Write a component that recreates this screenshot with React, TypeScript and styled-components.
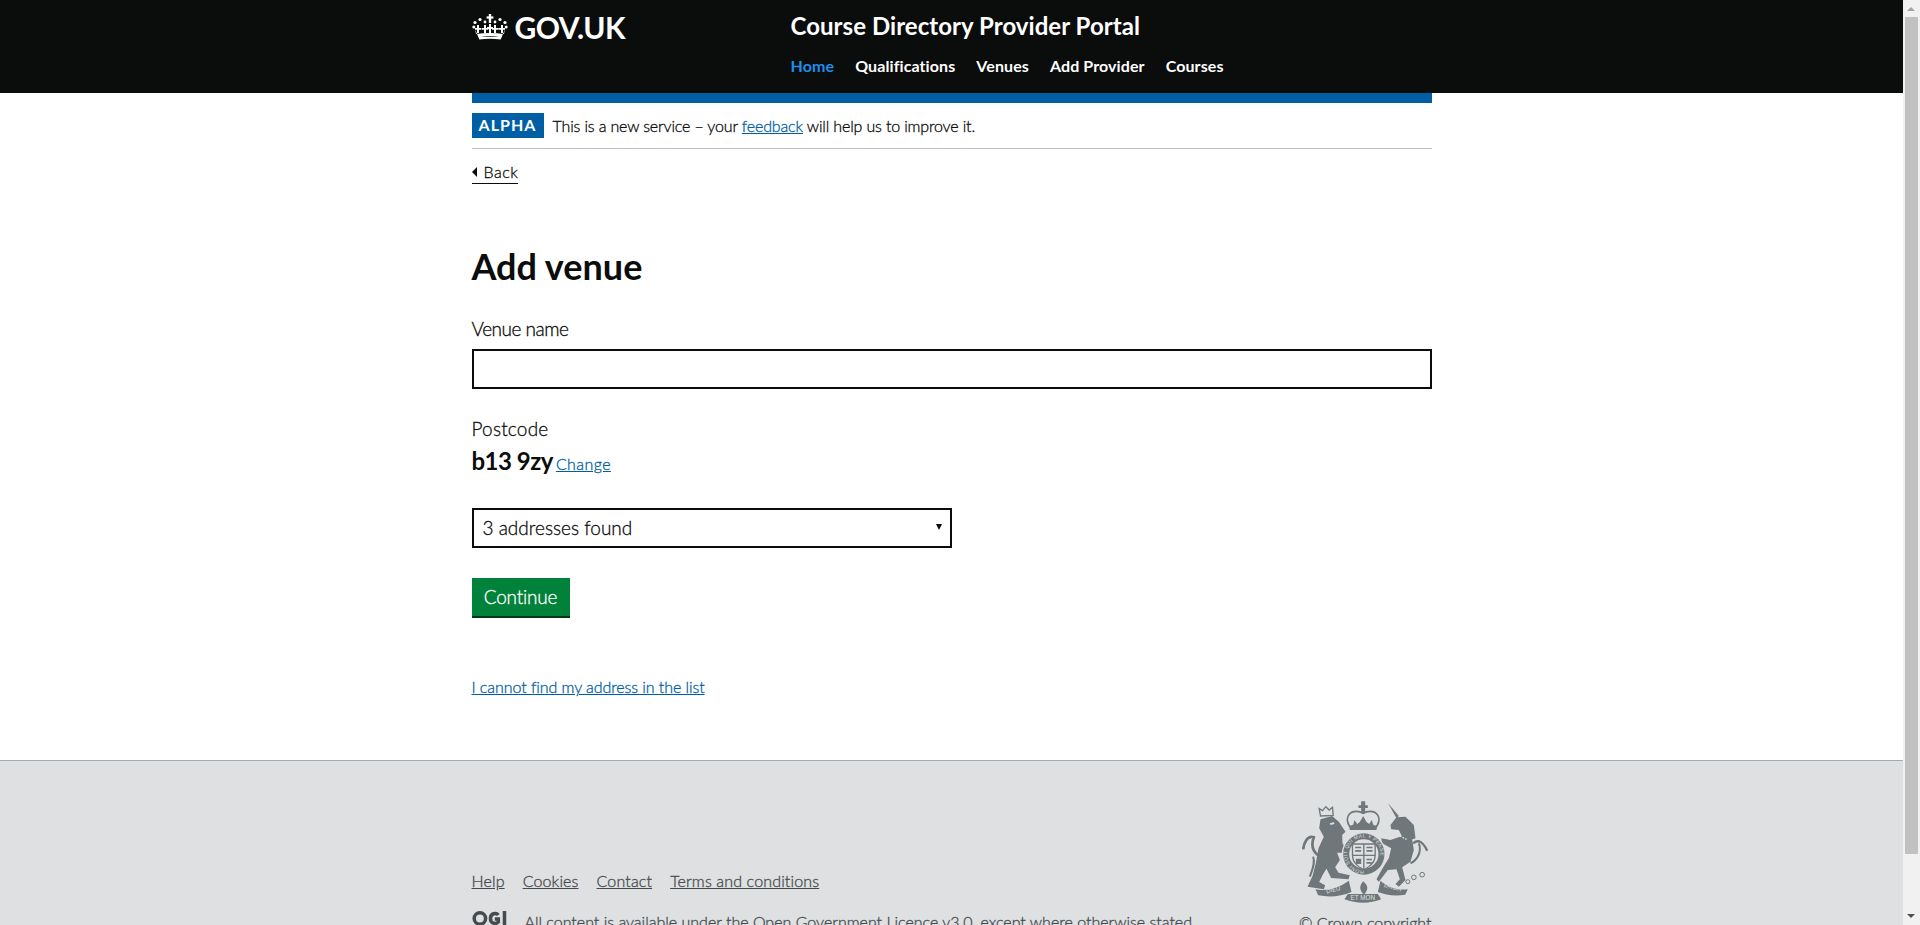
import React from 'react';
import styled, { createGlobalStyle } from 'styled-components';

const GlobalStyle = createGlobalStyle`
  body {
    margin: 0;
    background: #fff;
    color: #0b0c0c;
    font-family: Lato, "Liberation Sans", sans-serif;
    font-weight: 300;
    -webkit-text-stroke: 0.3px currentColor;
  }
`;

const Page = styled.div`
  padding-right: 17px;
`;

const ScrollTrack = styled.div`
  position: fixed;
  top: 0;
  right: 0;
  bottom: 0;
  width: 17px;
  background: #f1f1f1;
`;

const ScrollThumb = styled.div`
  width: 13px;
  height: 837px;
  margin: 17px 0 0 2px;
  background: #c1c1c1;
`;

const ScrollArrow = styled.span<{ $down?: boolean }>`
  position: absolute;
  left: 4px;
  ${(p) => (p.$down ? 'bottom: 7px;' : 'top: 7px;')}
  border-style: solid;
  border-width: ${(p) => (p.$down ? '4px 4.5px 0' : '0 4.5px 4px')};
  border-color: ${(p) =>
    p.$down ? '#505050 transparent transparent' : 'transparent transparent #a3a3a3'};
`;

const Wrapper = styled.div`
  width: 960px;
  margin: 0 auto;
`;

const Header = styled.header`
  background: #0b0c0c;
  height: 93px;
`;

const HeaderInner = styled(Wrapper)`
  display: grid;
  grid-template-columns: 319px 1fr;
`;

const Logo = styled.a`
  display: flex;
  align-items: center;
  gap: 7px;
  height: 53px;
  color: #fff;
  font-size: 30px;
  font-weight: 700;
  letter-spacing: -0.5px;
  -webkit-text-stroke: 0;
`;

const Proposition = styled.div`
  display: flex;
  flex-direction: column;
`;

const ServiceName = styled.a`
  height: 53px;
  line-height: 52px;
  color: #fff;
  font-size: 24px;
  font-weight: 700;
  letter-spacing: 0.05px;
  -webkit-text-stroke: 0;
`;

const Nav = styled.nav`
  display: flex;
  gap: 21px;
  height: 28px;
  line-height: 26px;
`;

const NavLink = styled.a<{ $active?: boolean }>`
  color: ${(p) => (p.$active ? '#1d8feb' : '#fff')};
  font-size: 16px;
  font-weight: 700;
  letter-spacing: 0.1px;
  -webkit-text-stroke: 0;
`;

const Main = styled(Wrapper)`
  height: 667px;
`;

const BlueBar = styled.div`
  height: 10px;
  background: #005ea5;
`;

const PhaseBanner = styled.div`
  display: flex;
  align-items: center;
  gap: 9px;
  height: 46px;
  box-sizing: border-box;
  border-bottom: 1px solid #bfc1c3;
  font-size: 16px;
  letter-spacing: -0.15px;
`;

const PhaseTag = styled.strong`
  display: block;
  width: 72px;
  height: 25px;
  line-height: 24px;
  background: #005ea5;
  color: #fff;
  font-size: 16px;
  font-weight: 700;
  letter-spacing: 1px;
  text-align: center;
  -webkit-text-stroke: 0;
`;

const BlueLink = styled.a<{ $spacing?: number }>`
  color: #005ea5;
  font-size: 16px;
  letter-spacing: ${(p) => p.$spacing ?? 0}px;
  text-decoration: underline;
`;

const BackLink = styled.a`
  display: inline-flex;
  align-items: center;
  gap: 7px;
  height: 23px;
  margin-top: 11px;
  border-bottom: 1px solid #0b0c0c;
  color: #0b0c0c;
  font-size: 16px;
  letter-spacing: 0.5px;
  &::before {
    content: '';
    border-style: solid;
    border-width: 5px 5px 5px 0;
    border-color: transparent #0b0c0c transparent transparent;
  }
`;

const Heading = styled.h1`
  margin: 56px 0 0;
  height: 52px;
  line-height: 52px;
  font-size: 36px;
  font-weight: 700;
  -webkit-text-stroke: 0;
`;

const Label = styled.label<{ $spacing?: number }>`
  display: block;
  height: 27px;
  line-height: 27px;
  font-size: 19px;
  letter-spacing: ${(p) => p.$spacing ?? 0}px;
`;

const VenueLabel = styled(Label)`
  margin-top: 23px;
  margin-bottom: 7px;
`;

const PostcodeLabel = styled(Label)`
  margin-top: 26px;
`;

const TextInput = styled.input`
  display: block;
  box-sizing: border-box;
  width: 100%;
  height: 40px;
  border: 2px solid #0b0c0c;
  border-radius: 0;
  background: #fff;
  outline: none;
`;

const PostcodeRow = styled.div`
  display: flex;
  align-items: baseline;
  gap: 3px;
  height: 38px;
  line-height: 38px;
`;

const PostcodeValue = styled.span`
  font-size: 24px;
  font-weight: 700;
  letter-spacing: -0.5px;
  -webkit-text-stroke: 0;
`;

const SelectBox = styled.div`
  position: relative;
  display: flex;
  align-items: center;
  box-sizing: border-box;
  width: 480px;
  height: 40px;
  margin-top: 28px;
  padding: 0 0 1px 9px;
  border: 2px solid #0b0c0c;
  font-size: 19px;
  &::after {
    content: '';
    position: absolute;
    right: 8px;
    top: 14px;
    border-style: solid;
    border-width: 6px 3px 0;
    border-color: #0b0c0c transparent transparent;
  }
`;

const Button = styled.button`
  display: block;
  width: 98px;
  height: 40px;
  margin-top: 30px;
  padding: 0 0 3px;
  border: 0;
  border-radius: 0;
  background: #00823b;
  box-shadow: inset 0 -2px 0 #003618;
  color: #fff;
  font-family: inherit;
  font-size: 19px;
  font-weight: 300;
  letter-spacing: -0.2px;
`;

const AddressLink = styled.p`
  margin: 57px 0 0;
  line-height: 24px;
`;

const Footer = styled.footer`
  box-sizing: border-box;
  height: 224px;
  border-top: 1px solid #a1acb2;
  background: #dee0e2;
  color: #454a4c;
  font-size: 16px;
`;

const FooterInner = styled(Wrapper)`
  display: flex;
  justify-content: space-between;
`;

const FooterMeta = styled.div`
  padding-top: 108px;
`;

const FooterLinks = styled.div`
  display: flex;
  gap: 18px;
  height: 24px;
  line-height: 23px;
  letter-spacing: 0.15px;
`;

const FooterLink = styled.a`
  color: #454a4c;
  text-decoration: underline;
`;

const Licence = styled.div`
  display: flex;
  gap: 17px;
  margin-top: 17px;
  line-height: 24px;
`;

const Copyright = styled.div`
  display: flex;
  flex-direction: column;
  align-items: flex-end;
  padding-top: 39px;
`;

const CrestFrame = styled.div`
  margin-right: 3px;
  line-height: 0;
`;

const CrestCaption = styled.span`
  margin-top: 6px;
  line-height: 24px;
`;

const CrownLogo = () => (
  <svg width="36" height="26" viewBox="0 0 36 26" fill="#fff">
    <rect x="16.8" y="0" width="2.4" height="9" />
    <rect x="14.6" y="2.4" width="6.8" height="2.2" />
    <circle cx="3" cy="8.5" r="1.6" />
    <circle cx="8" cy="5.5" r="1.6" />
    <circle cx="13" cy="8" r="1.4" />
    <circle cx="23" cy="8" r="1.4" />
    <circle cx="28" cy="5.5" r="1.6" />
    <circle cx="33" cy="8.5" r="1.6" />
    <circle cx="1.8" cy="13" r="1.5" />
    <circle cx="34.2" cy="13" r="1.5" />
    <path d="M5 11h2v3h2.4v1.8H7V19H5v-3.2H3V14h2zM12 11h2v3h2.4v1.8H14V19h-2v-3.2h-2V14h2zM22 11h2v3h2.4v1.8H24V19h-2v-3.2h-2V14h2zM29 11h2v3h2v1.800h-2V19h-2v-3.200h-2.400V14H29z" />
    <path d="M17 10h2v9h-2zM15 13h6v2h-6z" />
    <path d="M3 15c1 3 2 5 3.500 8.400C14 21.800 22 21.800 29.500 23.400 31 20 32 18 33 15l-1 5c-9-1.500-19-1.500-28 0z" />
    <path d="M6.500 23h23l-.8 2.600c-7-1.100-14.400-1.100-21.400 0z" />
  </svg>
);

const CREST_TEXT = 'Liberation Sans, sans-serif';

const Crest = () => (
  <svg width="127" height="105" viewBox="95 60 380 315" fill="#6f777b" style={{ WebkitTextStroke: 0 }}>
    {/* royal crown */}
    <path d="M272 64h12v12h8v8h-8v16h-12V84h-8v-8h8z" />
    <path
      d="M238 140c-16-24-4-46 20-46 8 0 14 2 20 6 6-4 12-6 20-6 24 0 36 22 20 46"
      fill="none"
      stroke="#6f777b"
      strokeWidth="5"
    />
    <path d="M238 150l-2-12 12-4 4-14 8 12 8-6 10-18 10 18 8 6 8-12 4 14 12 4-2 12z" />
    {/* lion */}
    <path d="M150 108l-4-22 10 6 10-12 10 10 10-8 2 24z" fill="none" stroke="#6f777b" strokeWidth="4" />
    <path d="M150 118L185 108 205 125 225 155 215 165 216 190 226 205 220 218 200 218 208 240 194 262 204 278 238 286 234 298 182 294 168 266 158 282 146 306 164 316 160 328 111 320 126 288 136 250 144 205 160 170 146 145z" />
    <path d="M145 228C120 210 125 185 130 172 110 165 100 190 98 208" fill="none" stroke="#6f777b" strokeWidth="8" />
    <path d="M128 230C135 250 125 270 118 290" fill="none" stroke="#6f777b" strokeWidth="6" />
    <path d="M178 130l12-3 2 5-12 3z" fill="#dee0e2" />
    {/* unicorn */}
    <path d="M353 70L385 108 378 115z" />
    <path d="M378 112L405 110 430 135 435 175 420 180 395 170 385 150 362 148 360 135z" />
    <path d="M395 168L425 178 430 210 420 245 395 262 405 300 385 320 375 312 388 298 378 268 352 270 325 305 318 298 338 262 355 235 362 205 335 190 332 175 360 180z" />
    <path d="M428 190C445 175 460 190 470 212" fill="none" stroke="#6f777b" strokeWidth="7" />
    <path d="M445 190C455 215 440 240 420 250" fill="none" stroke="#6f777b" strokeWidth="6" />
    <path d="M372 160l36 18" fill="none" stroke="#dee0e2" strokeWidth="4" strokeDasharray="5 4" />
    <circle cx="430" cy="292" r="7" fill="none" stroke="#6f777b" strokeWidth="3" />
    <circle cx="455" cy="284" r="7" fill="none" stroke="#6f777b" strokeWidth="3" />
    <circle cx="412" cy="305" r="6" fill="none" stroke="#6f777b" strokeWidth="3" />
    {/* garter and shield */}
    <circle cx="280" cy="222" r="66" fill="#dee0e2" />
    <circle cx="280" cy="222" r="62" />
    <circle cx="280" cy="222" r="44" fill="#dee0e2" />
    <path d="M244 190h72v36c0 22-16 36-36 44-20-8-36-22-36-44z" />
    <path d="M248 194h30v30h-30zM282 194h30v30h-30zM248 228h30v38c-16-8-28-20-30-38zM282 228h30c-2 18-14 30-30 38z" fill="#dee0e2" />
    <path d="M254 200h18v5h-18zM254 210h18v5h-18zM288 200h18v5h-18zM288 210h18v5h-18zM256 236h16v16h-16zM288 236h16v5h-16zM288 246h16v5h-16z" />
    <defs>
      <path id="garter" d="M280 272a50 50 0 1 1 .01 0" />
    </defs>
    <text fontSize="15" fill="#dee0e2" fontFamily={CREST_TEXT} letterSpacing="1.2">
      <textPath href="#garter">HONI SOIT QUI MAL Y PENSE</textPath>
    </text>
    {/* motto */}
    <path d="M135 328c34 6 70-4 100-26l8 34c-32 14-66 16-100 10z" />
    <path d="M232 342h90l10 16c-34 14-74 14-110 0z" />
    <path d="M330 302c22 20 50 30 82 26l-8 16c-32 6-60 0-82-8z" />
    <path d="M278 304c14 12 18 24 2 40-16-16-12-28-2-40z" />
    <text x="190" y="335" fontSize="18" fill="#dee0e2" textAnchor="middle" fontFamily={CREST_TEXT} transform="rotate(-14 190 335)">
      DIEU
    </text>
    <text x="277" y="361" fontSize="19" fill="#dee0e2" textAnchor="middle" fontFamily={CREST_TEXT}>
      ET MON
    </text>
    <text x="367" y="328" fontSize="18" fill="#dee0e2" textAnchor="middle" fontFamily={CREST_TEXT} transform="rotate(16 367 328)">
      DROIT
    </text>
  </svg>
);

const OglLogo = () => (
  <svg width="36" height="17" viewBox="0 0 41 17" fill="none" stroke="#454a4c" strokeWidth="4">
    <circle cx="9" cy="8.500" r="6.500" />
    <path d="M30 4.500c-2-2.500-9-2.500-9 4s7 6.500 9 4V9h-4" />
    <path d="M37 0v17" />
  </svg>
);

export default function App() {
  return (
    <Page>
      <GlobalStyle />
      <Header>
        <HeaderInner>
          <Logo>
            <CrownLogo />
            GOV.UK
          </Logo>
          <Proposition>
            <ServiceName>Course Directory Provider Portal</ServiceName>
            <Nav>
              <NavLink $active>Home</NavLink>
              <NavLink>Qualifications</NavLink>
              <NavLink>Venues</NavLink>
              <NavLink>Add Provider</NavLink>
              <NavLink>Courses</NavLink>
            </Nav>
          </Proposition>
        </HeaderInner>
      </Header>
      <Main>
        <BlueBar />
        <PhaseBanner>
          <PhaseTag>ALPHA</PhaseTag>
          <span>
            This is a new service – your <BlueLink $spacing={-0.15}>feedback</BlueLink> will help us to improve it.
          </span>
        </PhaseBanner>
        <BackLink>Back</BackLink>
        <Heading>Add venue</Heading>
        <VenueLabel $spacing={-0.5}>Venue name</VenueLabel>
        <TextInput type="text" />
        <PostcodeLabel $spacing={0.2}>Postcode</PostcodeLabel>
        <PostcodeRow>
          <PostcodeValue>b13 9zy</PostcodeValue>
          <BlueLink $spacing={0.4}>Change</BlueLink>
        </PostcodeRow>
        <SelectBox>3 addresses found</SelectBox>
        <Button>Continue</Button>
        <AddressLink>
          <BlueLink $spacing={-0.07}>I cannot find my address in the list</BlueLink>
        </AddressLink>
      </Main>
      <Footer>
        <FooterInner>
          <FooterMeta>
            <FooterLinks>
              <FooterLink>Help</FooterLink>
              <FooterLink>Cookies</FooterLink>
              <FooterLink>Contact</FooterLink>
              <FooterLink>Terms and conditions</FooterLink>
            </FooterLinks>
            <Licence>
              <OglLogo />
              <span>
                All content is available under the <FooterLink>Open Government Licence v3.0</FooterLink>, except where
                otherwise stated
              </span>
            </Licence>
          </FooterMeta>
          <Copyright>
            <CrestFrame>
              <Crest />
            </CrestFrame>
            <CrestCaption>© Crown copyright</CrestCaption>
          </Copyright>
        </FooterInner>
      </Footer>
      <ScrollTrack>
        <ScrollArrow />
        <ScrollThumb />
        <ScrollArrow $down />
      </ScrollTrack>
    </Page>
  );
}
